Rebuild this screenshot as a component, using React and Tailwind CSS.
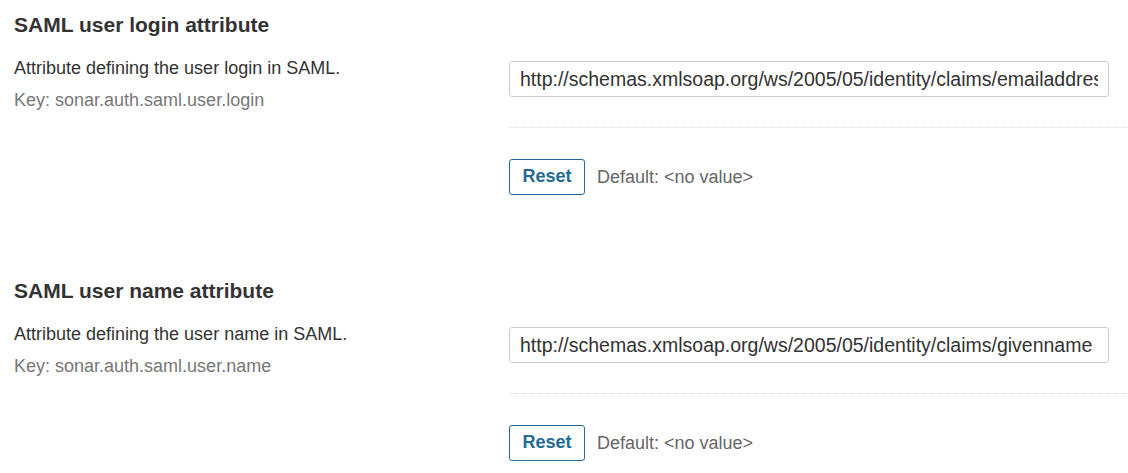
import React from 'react';

// Two SAML attribute settings, each with a text field and a reset row.
const settings = [
  {
    title: 'SAML user login attribute',
    description: 'Attribute defining the user login in SAML.',
    settingKey: 'sonar.auth.saml.user.login',
    value: 'http://schemas.xmlsoap.org/ws/2005/05/identity/claims/emailaddress',
  },
  {
    title: 'SAML user name attribute',
    description: 'Attribute defining the user name in SAML.',
    settingKey: 'sonar.auth.saml.user.name',
    value: 'http://schemas.xmlsoap.org/ws/2005/05/identity/claims/givenname',
  },
];

function Setting({ title, description, settingKey, value }) {
  return (
    <div className="pt-[13px] pb-[71px]">
      <h3 className="text-[21px] leading-[24px] font-bold text-[#333]">{title}</h3>
      <div className="flex mt-[19px]">
        <div className="w-[495px] shrink-0">
          <div className="text-[18px] leading-[24px] text-[#333]">{description}</div>
          <div className="text-[18px] leading-[24px] text-[#777] mt-[8px]">Key: {settingKey}</div>
        </div>
        <div className="flex-1 pt-[5px]">
          <input
            type="text"
            defaultValue={value}
            className="w-[600px] h-[36px] px-[10px] border border-[#cdcdcd] rounded-[3px] bg-white text-[19.5px] text-[#333] outline-none"
          />
          <div className="mt-[30px] border-t border-dotted border-[#d9d9d9]" />
          <div className="flex items-center mt-[31px]">
            <button className="h-[36px] w-[76px] pb-[2px] border border-[#236a97] rounded-[3px] bg-white text-[#236a97] text-[18px] font-bold">
              Reset
            </button>
            <span className="ml-[12px] text-[18px] text-[#666]">Default: &lt;no value&gt;</span>
          </div>
        </div>
      </div>
    </div>
  );
}

export default function App() {
  return (
    <div
      className="bg-white pl-[14px] h-[473px] overflow-hidden"
      style={{ fontFamily: '"Liberation Sans", Arial, sans-serif' }}
    >
      {settings.map((s) => (
        <Setting key={s.settingKey} {...s} />
      ))}
    </div>
  );
}
